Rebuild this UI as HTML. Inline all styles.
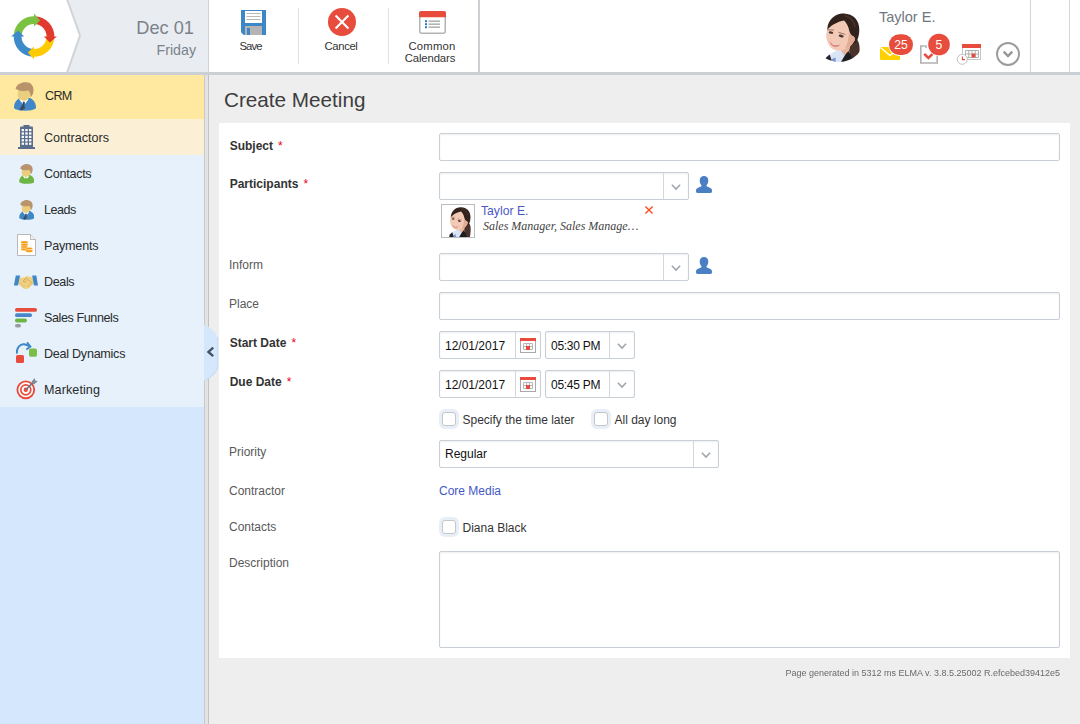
<!DOCTYPE html>
<html lang="en">
<head>
<meta charset="utf-8">
<title>Create Meeting</title>
<style>
*{box-sizing:border-box;margin:0;padding:0}
html,body{width:1080px;height:724px;overflow:hidden}
body{position:relative;background:#eeeeee;font-family:"Liberation Sans",Arial,sans-serif;font-size:12px;color:#333}
.abs{position:absolute}
/* header */
#hdr{position:absolute;left:0;top:0;width:1080px;height:72px;background:#fff}
#hdrline{position:absolute;left:0;top:72px;width:1080px;height:3px;background:#cbd0d5}
#datebg{position:absolute;left:60px;top:0;width:148px;height:72px;background:#e9edf2}
#logo{position:absolute;left:0;top:0}
.os{font-family:"Liberation Sans",Arial,sans-serif}
#d1{position:absolute;right:886px;top:16.5px;font-size:18.2px;line-height:22px;color:#7b828a;white-space:nowrap}
#d2{position:absolute;right:884px;top:41px;font-size:14.2px;line-height:18px;color:#7b828a;white-space:nowrap}
.vline{position:absolute;width:1px;background:#d3d7dc}
.tbtn{position:absolute;top:40px;text-align:center;font-size:11.3px;line-height:12px;color:#333;white-space:nowrap}
/* sidebar */
#side{position:absolute;left:0;top:75px;width:204px;height:649px;background:#d4e7fd}
#sideitems{position:absolute;left:0;top:0;width:204px;height:332px;background:#e6f1fc}
#crm{position:absolute;left:0;top:0;width:204px;height:44px;background:#ffe8a0}
#ctr{position:absolute;left:0;top:44px;width:204px;height:36px;background:#fbf0d6}
.mi{position:absolute;left:44px;font-size:12.6px;line-height:16px;color:#2b2b2b;white-space:nowrap}
#split{position:absolute;left:204px;top:75px;width:5px;height:649px;background:#e3e3e3;border-right:1px solid #c2c2c2;border-left:1px solid #c9c9c9}
/* main */
#title{position:absolute;left:224px;top:87px;font-size:20.7px;line-height:26px;color:#3d3d3d;white-space:nowrap}
#panel{position:absolute;left:219px;top:123px;width:851px;height:535px;background:#fff}
.lbl{position:absolute;left:229px;font-size:12px;line-height:14px;color:#595959;white-space:nowrap}
.lbl b{font-weight:bold;color:#333;margin-left:0.7px}
.lbl i{font-style:normal;color:#e8001c;margin-left:5px}
.inp{position:absolute;background:#fff;border:1px solid #c9cfd6;border-radius:2px;box-shadow:inset 0 1px 2px rgba(0,0,0,.07)}
.sep{position:absolute;top:0;bottom:0;width:1px;background:#d3d8de}
.txt{position:absolute;font-size:12px;line-height:14px;color:#111;white-space:nowrap}
.cb{position:absolute;width:14px;height:14px;border:1px solid #c6c6c6;border-radius:3px;background:#fff;box-shadow:0 0 0 3px #e7eef8}
#foot{position:absolute;right:20px;top:668px;font-size:9px;line-height:11px;color:#6a6a6a;white-space:nowrap;transform:scaleY(1.08);transform-origin:50% 78%}
</style>
</head>
<body>
<div id="hdr"></div>
<div id="datebg"></div>
<!-- header: logo + chevron -->
<svg id="logo" width="100" height="72" viewBox="0 0 100 72">
  <polygon points="0,0 67,0 80,35.5 67,72 0,72" fill="#fff"/>
  <polyline points="67,-1 80,35.5 67,73" fill="none" stroke="#d0d4d9" stroke-width="2"/>
  <g id="ring">
  <path d="M13.7,36.1 A20.3,20.3 0 0 1 35.4,16.2 L34.9,24.0 A12.5,12.5 0 0 0 21.5,36.3 Z" fill="#7cc242"/>
  <path d="M34.4,16.2 A20.3,20.3 0 0 1 54.3,37.9 L46.5,37.4 A12.5,12.5 0 0 0 34.2,24.0 Z" fill="#e2392f"/>
  <path d="M54.3,36.9 A20.3,20.3 0 0 1 32.6,56.8 L33.1,49.0 A12.5,12.5 0 0 0 46.5,36.7 Z" fill="#fdcb00"/>
  <path d="M33.6,56.8 A20.3,20.3 0 0 1 13.7,35.1 L21.5,35.6 A12.5,12.5 0 0 0 33.8,49.0 Z" fill="#3c8aca"/>
  <polygon points="34.0,13.6 40.1,20.6 34.0,26.6" fill="#7cc242"/>
  <polygon points="56.9,36.5 49.9,42.6 43.9,36.5" fill="#e2392f"/>
  <polygon points="34.0,59.4 27.9,52.4 34.0,46.4" fill="#fdcb00"/>
  <polygon points="11.1,36.5 18.1,30.4 24.1,36.5" fill="#3c8aca"/>
  </g>
</svg>
<div id="d1" class="os">Dec 01</div>
<div id="d2" class="os">Friday</div>
<div class="vline" style="left:208px;top:0;height:72px;background:#cfd3d8"></div>
<div class="vline" style="left:298px;top:8px;height:56px;background:#dfe2e6"></div>
<div class="vline" style="left:388px;top:8px;height:56px;background:#dfe2e6"></div>
<div class="vline" style="left:478px;top:0;height:72px;width:2px;background:#ccd0d5"></div>
<div class="vline" style="left:1030px;top:0;height:72px"></div>
<div class="vline" style="left:1069px;top:0;height:72px"></div>
<div id="hdrline"></div>

<div class="tbtn os" style="left:220.5px;width:60px;letter-spacing:-0.9px">Save</div>
<div class="tbtn os" style="left:311px;width:60px;letter-spacing:-0.36px">Cancel</div>
<div class="tbtn os" style="left:392px;width:80px;letter-spacing:0.2px">Common</div>
<div class="tbtn os" style="left:390px;top:52px;width:80px;letter-spacing:-0.12px">Calendars</div>

<!-- toolbar icons -->
<svg class="abs" style="left:241px;top:10px" width="25" height="25" viewBox="0 0 25 25">
  <path d="M0,0 H25 V25 H2.8 L0,22.2 Z" fill="#3d87c9"/>
  <rect x="4" y="1" width="17" height="12" fill="#fff"/>
  <rect x="5.5" y="3" width="14" height="1" fill="#b8b8b8"/>
  <rect x="5.5" y="6" width="14" height="1" fill="#b8b8b8"/>
  <rect x="5.5" y="9" width="14" height="1" fill="#b8b8b8"/>
  <rect x="4" y="16" width="17" height="9" fill="#b4b4b4"/>
  <rect x="6" y="18" width="3" height="7" fill="#3d87c9"/>
</svg>
<svg class="abs" style="left:328px;top:8px" width="28" height="28" viewBox="0 0 28 28">
  <circle cx="14" cy="14" r="14" fill="#e74c3c"/>
  <path d="M7.6,7.6 L20.4,20.4 M20.4,7.6 L7.6,20.4" stroke="#fff" stroke-width="2.1" fill="none"/>
</svg>
<svg class="abs" style="left:419px;top:11px" width="27" height="23" viewBox="0 0 27 23">
  <rect x="0.75" y="0.75" width="25.5" height="21.5" rx="2" fill="#fff" stroke="#b4b4b4" stroke-width="1.5"/>
  <path d="M0,2 a2,2 0 0 1 2,-2 h23 a2,2 0 0 1 2,2 v4.2 h-27 z" fill="#e74c3c"/>
  <rect x="6" y="9.2" width="2" height="2" fill="#2f7cc4"/>
  <rect x="6" y="12.2" width="2" height="2" fill="#2f7cc4"/>
  <rect x="6" y="15.2" width="2" height="2" fill="#2f7cc4"/>
  <rect x="9.5" y="9.4" width="11.5" height="1.6" fill="#b4b4b4"/>
  <rect x="9.5" y="12.4" width="11.5" height="1.6" fill="#b4b4b4"/>
  <rect x="9.5" y="15.4" width="11.5" height="1.6" fill="#b4b4b4"/>
</svg>

<!-- user area -->
<svg width="0" height="0" style="position:absolute">
  <defs>
    <filter id="soft" x="-10%" y="-10%" width="120%" height="120%"><feGaussianBlur stdDeviation="0.45"/></filter>
    <symbol id="ava" viewBox="0 0 52 52">
      <g filter="url(#soft)">
        <path d="M40,26 C44.5,28 47,33 46.6,40 C46.4,45 46,49 45.2,52 L38.4,52 C36,47.6 34.6,42 34.4,37 Z" fill="#4a312b"/>
        <path d="M14.6,23 C12.8,10.5 22,3.2 31,3.5 C40,3.8 46.6,10 46.3,20 C46.2,27 44,32 41,34 L28,30 Z" fill="#33211f"/>
        <path d="M32,5.5 C37,7 41,11 42,17" fill="none" stroke="#5a3d36" stroke-width="1.6" opacity=".6"/>
        <path d="M13.2,47.4 C16,44.6 20,42.6 25,40 L34.6,38.6 L37,43 L29,52 L15,52 Z" fill="#d9e4f6"/>
        <path d="M35,40 L38.6,46.6 L40.4,52 L28,52 Z" fill="#1d1d20"/>
        <path d="M12.6,48 L16.6,44.4 L19.4,52 L11.6,52 Z" fill="#26262b"/><path d="M18,49.4 L22.4,47.6 L23,52 L19,52 Z" fill="#7f97d0"/>
        <path d="M26.6,38 L38,33 L36.2,40.4 L31,45.6 Z" fill="#e7b49c"/>
        <path d="M15.2,19 C19,14.6 25.5,11.6 31,10.6 C33.6,13 35.6,17 36.1,20.2 C37,24 39,26 40.6,26.4 C42.2,27.5 42.2,30 41,31.5 C38,36.5 32,41.2 24,40.5 C18,39.5 13.5,33 13.2,26.4 C13.2,23 14,20 15.5,17.5 Z" fill="#f3cab5"/>
        <path d="M36,22 C37,25 39,26.6 40.6,26.4 C42.2,27.5 42.2,30 41,31.5 C39,34.6 36,37.4 32,39 C34.6,34 36,28 36,22 Z" fill="#e2ab93"/>
        <ellipse cx="18" cy="22.6" rx="2.3" ry="1.2" transform="rotate(8 18 22.6)" fill="#4a3532"/><ellipse cx="28.2" cy="26" rx="2.6" ry="1.3" transform="rotate(18 28.2 26)" fill="#4a3532"/>
        <path d="M15.2,19.8 l5.4,0.3 M25.8,22.4 l6,2" stroke="#6b4d45" stroke-width="0.9" stroke-linecap="round" opacity=".75"/>
        <path d="M16.6,31.6 C19,34.6 23.4,36 27,34.6 C24.6,38.2 18.4,37.6 16.6,31.6 Z" fill="#d56a6e"/>
        <path d="M17.8,32.8 C20,34.6 23,35.2 25.6,34.6 C23,36 19.6,35.4 17.8,32.8 Z" fill="#fff"/>
      </g>
    </symbol>
  </defs>
</svg>
<svg class="abs" style="left:813px;top:10px;clip-path:circle(26px at 26px 26px)" width="52" height="52"><use href="#ava"/></svg>
<svg class="abs" style="left:876px;top:30px" width="150" height="40" viewBox="876 30 150 40">
  <!-- mail -->
  <rect x="880" y="47" width="20" height="13" rx="1.2" fill="#fdd000"/>
  <polyline points="880.5,47.5 890,55.5 899.5,47.5" fill="none" stroke="#fff" stroke-width="1.4"/>
  <rect x="888.2" y="33.5" width="25.6" height="22.4" rx="11.2" fill="#fff"/>
  <rect x="889" y="34.3" width="24" height="20.8" rx="10.4" fill="#e74c3c"/>
  <!-- tasks -->
  <path d="M924.8,46 H920.8 V63 H937.2 V55" fill="none" stroke="#b1b1b1" stroke-width="1.6"/>
  <rect x="925.2" y="45.2" width="1.6" height="2.8" fill="#b1b1b1"/>
  <polyline points="924.2,53.8 928.4,58 932.6,53.8" fill="none" stroke="#e74c3c" stroke-width="2.5"/>
  <circle cx="939" cy="44.5" r="11.6" fill="#fff"/>
  <circle cx="939" cy="44.5" r="10.8" fill="#e74c3c"/>
  <!-- calendar w/ clock -->
  <rect x="962.5" y="44.5" width="18" height="15" fill="#fff" stroke="#c6c6c6" stroke-width="1"/>
  <rect x="962" y="44" width="19" height="4" fill="#e74c3c"/>
  <path d="M965.5,50.5 H978.5 V57.5 H965.5 Z M965.5,54 H978.5 M968.75,50.5 V57.5 M972,50.5 V57.5 M975.25,50.5 V57.5" fill="none" stroke="#b0b0b0" stroke-width="1"/>
  <rect x="971.6" y="53.6" width="3.8" height="3.8" fill="#e74c3c"/>
  <circle cx="962.3" cy="59.3" r="5" fill="#fff" stroke="#c2c2c2" stroke-width="1"/>
  <path d="M962.4,56.6 V59.6 H965" fill="none" stroke="#e74c3c" stroke-width="1.1"/>
  <!-- dropdown -->
  <circle cx="1008" cy="54" r="11" fill="#fff" stroke="#9b9b9b" stroke-width="1.9"/>
  <polyline points="1003.7,51.7 1008,56 1012.3,51.7" fill="none" stroke="#979797" stroke-width="2.4"/>
  <text x="901.1" y="48.9" font-family="Liberation Sans, Arial, sans-serif" font-size="12.2" fill="#fff" text-anchor="middle">25</text>
  <text x="939" y="48.9" font-family="Liberation Sans, Arial, sans-serif" font-size="12.2" fill="#fff" text-anchor="middle">5</text>
</svg>

<!-- sidebar -->
<div id="side">
  <div id="sideitems"></div>
  <div id="crm"></div>
  <div id="ctr"></div>
  <div class="mi" style="top:13px;left:45px;font-size:12.6px;letter-spacing:-0.7px">CRM</div>
  <div class="mi" style="top:55px">Contractors</div>
  <div class="mi" style="top:91px;letter-spacing:-0.29px">Contacts</div>
  <div class="mi" style="top:127px;letter-spacing:-0.5px">Leads</div>
  <div class="mi" style="top:163px;letter-spacing:-0.21px">Payments</div>
  <div class="mi" style="top:199px;letter-spacing:-0.4px">Deals</div>
  <div class="mi" style="top:235px;letter-spacing:-0.42px">Sales Funnels</div>
  <div class="mi" style="top:271px;letter-spacing:-0.27px">Deal Dynamics</div>
  <div class="mi" style="top:307px;letter-spacing:0.08px">Marketing</div>
</div>
<svg width="0" height="0" style="position:absolute">
  <defs>
    <symbol id="pers" viewBox="0 0 22 29">
      <path d="M0,25.8 C0,20 3.6,16.4 8,15.6 L14,15.6 C18.4,16.4 22,20 22,25.8 C22,27.4 17,28.7 11,28.7 C5,28.7 0,27.4 0,25.8 Z" fill="currentColor"/>
      <path d="M5.2,17.4 L8.6,21.8 L9.8,19.6 L11.2,21.8 L14.4,17.4 L12.6,15.2 L7.2,15.2 Z" fill="#fff"/>
      <path d="M8.8,19.8 L10.9,19.8 L10.4,21.8 L10.9,26.6 L7.6,28.5 L5.4,27.6 L8.9,21.8 Z" style="fill:var(--tie,#3d4a5c)"/>
      <ellipse cx="9.9" cy="12" rx="6.3" ry="6.7" fill="#e9cf7d"/>
      <path d="M1.6,6.8 C2.6,2 7.6,-0.2 12.6,0.2 C17.8,0.7 20,4.8 19.4,9.2 C19.1,12 18,14.2 16.4,15.4 C16.8,12.4 16,9.8 14,8.2 C10.6,9.6 5.6,9.6 1.6,6.8 Z" fill="#b9936b"/>
    </symbol>
  </defs>
</svg>
<!-- CRM -->
<svg class="abs" style="left:14px;top:82px;color:#3f87c6" width="22" height="29"><use href="#pers"/></svg>
<!-- Contractors: building -->
<svg class="abs" style="left:18px;top:125px" width="17" height="24" viewBox="0 0 17 24">
  <rect x="5.5" y="0" width="6" height="2" fill="#5b6d8c"/>
  <rect x="2" y="1.4" width="13" height="21" rx="1" fill="#5b6d8c"/>
  <rect x="0" y="22" width="17" height="2" fill="#5b6d8c"/>
  <g fill="#fff">
    <rect x="3.6" y="4" width="2.4" height="2.2"/><rect x="7.3" y="4" width="2.4" height="2.2"/><rect x="11" y="4" width="2.4" height="2.2"/>
    <rect x="3.6" y="7.4" width="2.4" height="2.2"/><rect x="7.3" y="7.4" width="2.4" height="2.2"/><rect x="11" y="7.4" width="2.4" height="2.2"/>
    <rect x="3.6" y="10.8" width="2.4" height="2.2"/><rect x="7.3" y="10.8" width="2.4" height="2.2"/><rect x="11" y="10.8" width="2.4" height="2.2"/>
    <rect x="3.6" y="14.2" width="2.4" height="2.2"/><rect x="7.3" y="14.2" width="2.4" height="2.2"/><rect x="11" y="14.2" width="2.4" height="2.2"/>
    <rect x="3.6" y="17.6" width="2.4" height="2.2"/><rect x="7.3" y="17.6" width="2.4" height="2.2"/><rect x="11" y="17.6" width="2.4" height="2.2"/>
  </g>
</svg>
<!-- Contacts -->
<svg class="abs" style="left:18.5px;top:163.5px;color:#6db544;--tie:#6db544" width="15.6" height="20"><use href="#pers"/></svg>
<!-- Leads -->
<svg class="abs" style="left:18.5px;top:199.5px;color:#3f87c6" width="15.6" height="20"><use href="#pers"/></svg>
<!-- Payments -->
<svg class="abs" style="left:17px;top:234px" width="20" height="22" viewBox="0 0 20 22">
  <path d="M0.5,0.5 H13.5 L18.5,5.5 V21.5 H0.5 Z" fill="#fff" stroke="#b9b9b9" stroke-width="1"/>
  <path d="M13.5,0.5 V5.5 H18.5" fill="#f1f1f1" stroke="#b9b9b9" stroke-width="1"/>
  <g fill="#f6a11d">
    <ellipse cx="7.4" cy="8.4" rx="3.5" ry="1.3"/><ellipse cx="7.4" cy="10.7" rx="3.5" ry="1.3"/><ellipse cx="7.4" cy="13" rx="3.5" ry="1.3"/><ellipse cx="7.4" cy="15.3" rx="3.5" ry="1.3"/>
    <ellipse cx="12.2" cy="14.6" rx="3.5" ry="1.3" stroke="#fff" stroke-width=".5"/><ellipse cx="12.2" cy="16.9" rx="3.5" ry="1.3"/>
  </g>
  <g fill="none" stroke="#fde3b4" stroke-width="0.55">
    <path d="M4,9.55 h6.8 M4,11.85 h6.8 M4,14.15 h4.6 M8.8,15.75 h6.8"/>
  </g>
</svg>
<!-- Deals -->
<svg class="abs" style="left:14px;top:275px" width="24" height="15" viewBox="0 0 24 15">
  <path d="M5.6,2.8 L10.4,2.6 L12.4,0.9 L15,1.5 L18.6,2.6 L19.8,8 L16.4,11.8 L14.4,13.4 L12,14 L9,13.2 L4.2,8.6 Z" fill="#efd17f"/>
  <path d="M9.6,5.6 L11.6,3.2 L13.6,4.2 L18.4,8.6 M9.6,5.6 L9.8,7 L11.2,7.2 L12.6,5.6 M5.4,9 L6.6,7.8 M7.4,10.6 L8.6,9.4 M9.4,12 L10.6,10.8 M15,11.6 L13.6,10.4 M16.8,10 L15.4,8.8" fill="none" stroke="#cf9a52" stroke-width="0.8"/>
  <polygon points="1.8,0.4 6.1,0.4 4,10.4 -0.1,10.4" fill="#3f87c6"/>
  <polygon points="18.2,0.4 22.3,0.4 24,10.4 19.9,10.4" fill="#3f87c6"/>
</svg>
<!-- Sales Funnels -->
<svg class="abs" style="left:15px;top:308px" width="23" height="20" viewBox="0 0 23 20">
  <rect x="0" y="0" width="22" height="3.8" rx="1.9" fill="#e74c3c"/>
  <rect x="0" y="5.3" width="17" height="3.8" rx="1.9" fill="#4a86c8"/>
  <rect x="0" y="10.6" width="12" height="3.8" rx="1.9" fill="#6db544"/>
  <rect x="0" y="15.9" width="6" height="3.6" rx="1.8" fill="#9b9b9b"/>
</svg>
<!-- Deal Dynamics -->
<svg class="abs" style="left:15px;top:342px" width="23" height="22" viewBox="0 0 23 22">
  <rect x="1" y="13" width="8" height="8" rx="1.6" fill="#e74c3c"/>
  <rect x="14" y="6.6" width="8" height="8.2" rx="1.8" fill="#78be49"/>
  <path d="M1.9,11.6 C1.3,5.4 5.6,1.8 9,2.3 C11,2.6 13,3.4 14.4,4.3" fill="none" stroke="#3f87c6" stroke-width="1.9"/>
  <polyline points="12,0.4 15.4,4.5 11.4,7.4" fill="none" stroke="#3f87c6" stroke-width="1.9"/>
</svg>
<!-- Marketing -->
<svg class="abs" style="left:16px;top:377px" width="23" height="23" viewBox="0 0 23 23">
  <circle cx="9.8" cy="12.8" r="8.4" fill="#fff" stroke="#e74c3c" stroke-width="1.9"/>
  <circle cx="9.8" cy="12.8" r="5" fill="#fff" stroke="#e74c3c" stroke-width="1.7"/>
  <circle cx="9.8" cy="12.8" r="2.2" fill="#e74c3c"/>
  <path d="M9.8,12.8 L17,5.6" stroke="#6b7886" stroke-width="1.6" fill="none"/>
  <path d="M15.4,5 L18.6,1 L19.2,3.6 L21.8,4.2 L17.8,7.4 Z" fill="#7d8a99"/>
</svg>
<div id="split"></div>
<svg class="abs" style="left:204px;top:322px" width="16" height="62" viewBox="0 0 16 62">
  <path d="M0,2.6 Q9.6,7 13.7,15 L13.7,45.2 Q12.8,52 0,59.4 Z" fill="#d4e7fd"/>
  <path d="M13.7,15 L13.7,45.2 Q12.8,52 0,59.4" fill="none" stroke="#bdd6f3" stroke-width="0.9"/>
  <polyline points="9.2,25.6 4.4,29.9 9.2,34.2" fill="none" stroke="#475164" stroke-width="2.3"/>
</svg>

<!-- main -->
<div id="title" class="os">Create Meeting</div>
<div id="panel"></div>

<div class="lbl" style="top:139px"><b>Subject</b><i>*</i></div>
<div class="lbl" style="top:177px"><b>Participants</b><i>*</i></div>
<div class="lbl" style="top:258px">Inform</div>
<div class="lbl" style="top:297px">Place</div>
<div class="lbl" style="top:336px"><b>Start Date</b><i>*</i></div>
<div class="lbl" style="top:375px"><b>Due Date</b><i>*</i></div>
<div class="lbl" style="top:445px">Priority</div>
<div class="lbl" style="top:484px">Contractor</div>
<div class="lbl" style="top:520px">Contacts</div>
<div class="lbl" style="top:556px">Description</div>

<div class="inp" style="left:439px;top:133px;width:621px;height:28px"></div>
<div class="inp" style="left:439px;top:172px;width:250px;height:28px"><div class="sep" style="left:223px"></div></div>
<div class="inp" style="left:439px;top:253px;width:250px;height:28px"><div class="sep" style="left:223px"></div></div>
<div class="inp" style="left:439px;top:292px;width:621px;height:28px"></div>
<div class="inp" style="left:439px;top:331px;width:102px;height:28px"><div class="sep" style="left:75px"></div></div>
<div class="inp" style="left:545px;top:331px;width:90px;height:28px"><div class="sep" style="left:63px"></div></div>
<div class="inp" style="left:439px;top:370px;width:102px;height:28px"><div class="sep" style="left:75px"></div></div>
<div class="inp" style="left:545px;top:370px;width:90px;height:28px"><div class="sep" style="left:63px"></div></div>
<div class="inp" style="left:439px;top:440px;width:280px;height:28px"><div class="sep" style="left:253px"></div></div>
<div class="inp" style="left:439px;top:551px;width:621px;height:97px"></div>

<div class="txt" style="left:445px;top:339px">12/01/2017</div>
<div class="txt" style="left:551px;top:339px;letter-spacing:-0.27px">05:30 PM</div>
<div class="txt" style="left:445px;top:378px">12/01/2017</div>
<div class="txt" style="left:551px;top:378px;letter-spacing:-0.27px">05:45 PM</div>
<div class="txt" style="left:445px;top:447px">Regular</div>
<div class="txt" style="left:439px;top:484px;color:#3f58c4">Core Media</div>

<div class="cb" style="left:442px;top:412px"></div>
<div class="txt" style="left:462.5px;top:413px;color:#333">Specify the time later</div>
<div class="cb" style="left:594px;top:412px"></div>
<div class="txt" style="left:614.5px;top:413px;color:#333">All day long</div>
<div class="cb" style="left:442px;top:520px"></div>
<div class="txt" style="left:462.5px;top:521px;color:#333">Diana Black</div>

<!-- form icons -->
<svg width="0" height="0" style="position:absolute">
  <defs>
    <symbol id="chev" viewBox="0 0 10 7"><polyline points="0.9,0.8 5,5 9.1,0.8" fill="none" stroke="#a0a6ac" stroke-width="1.6"/></symbol>
    <symbol id="usr" viewBox="0 0 16 17">
      <path d="M8,0 C10.6,0 12.3,1.8 12.3,4.4 C12.3,6.4 11.6,8 10.6,9 C10.4,9.8 10.6,10.4 11.4,10.8 C13.6,11.6 15.4,12.2 15.8,13.4 C16.2,14.6 16,16 15.6,16.6 C15.4,16.9 15,17 14.6,17 L1.4,17 C1,17 0.6,16.9 0.4,16.6 C0,16 -0.2,14.6 0.2,13.4 C0.6,12.2 2.4,11.6 4.6,10.8 C5.4,10.4 5.6,9.8 5.4,9 C4.4,8 3.7,6.4 3.7,4.4 C3.7,1.8 5.4,0 8,0 Z" fill="#4a7fc3"/>
    </symbol>
    <symbol id="cal" viewBox="0 0 16 15">
      <rect x="0.5" y="0.5" width="15" height="14" fill="#fff" stroke="#a9a9a9" stroke-width="1"/>
      <rect x="0" y="0" width="16" height="3" fill="#e74c3c"/>
      <path d="M3.5,5.5 H12.5 V11.5 H3.5 Z M3.5,8.5 H12.5 M6.5,5.5 V11.5 M9.5,5.5 V11.5" fill="none" stroke="#b5b5b5" stroke-width="1"/>
      <rect x="6" y="8" width="4" height="4" fill="#e74c3c"/>
    </symbol>
  </defs>
</svg>
<svg class="abs" style="left:671px;top:183.5px" width="10" height="7"><use href="#chev"/></svg>
<svg class="abs" style="left:671px;top:264.5px" width="10" height="7"><use href="#chev"/></svg>
<svg class="abs" style="left:617px;top:342.5px" width="10" height="7"><use href="#chev"/></svg>
<svg class="abs" style="left:617px;top:381.5px" width="10" height="7"><use href="#chev"/></svg>
<svg class="abs" style="left:701px;top:451.5px" width="10" height="7"><use href="#chev"/></svg>
<svg class="abs" style="left:696.4px;top:175.8px" width="16" height="17"><use href="#usr"/></svg>
<svg class="abs" style="left:696.4px;top:256.8px" width="16" height="17"><use href="#usr"/></svg>
<svg class="abs" style="left:520px;top:338px" width="16" height="15"><use href="#cal"/></svg>
<svg class="abs" style="left:520px;top:377px" width="16" height="15"><use href="#cal"/></svg>
<svg class="abs" style="left:644px;top:205px" width="10" height="10" viewBox="0 0 10 10"><path d="M1.4,1.4 L8.6,8.6 M8.6,1.4 L1.4,8.6" stroke="#ff4b1f" stroke-width="1.4" fill="none"/></svg>

<!-- participant -->
<div class="abs" style="left:441px;top:204px;width:34px;height:34px;border:1px solid #bcbcbc;background:#fff"></div>
<svg class="abs" style="left:442px;top:205px" width="32" height="32"><use href="#ava"/></svg>
<div class="abs os" style="left:481px;top:203px;font-size:12.2px;line-height:16px;color:#4a58c6;white-space:nowrap">Taylor E.</div>
<div class="abs" style="left:483px;top:219px;font-family:'Liberation Serif',serif;font-style:italic;font-size:12px;line-height:15px;color:#444;white-space:nowrap">Sales Manager, Sales Manage…</div>

<div class="abs os" style="left:879px;top:8px;font-size:14.5px;line-height:18px;color:#6f7780;white-space:nowrap">Taylor E.</div>

<div id="foot">Page generated in 5312 ms ELMA v. 3.8.5.25002 R.efcebed39412e5</div>
</body>
</html>
